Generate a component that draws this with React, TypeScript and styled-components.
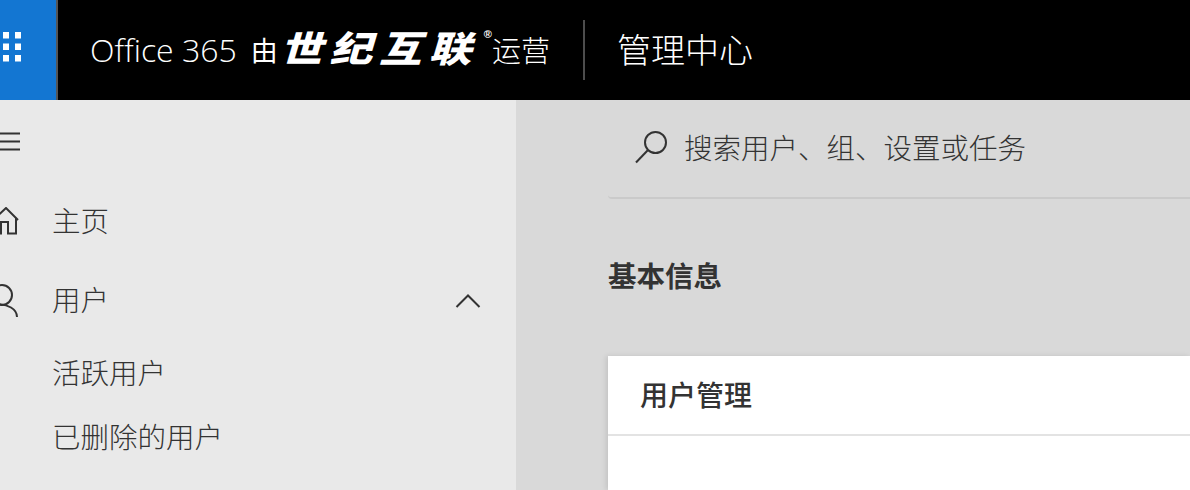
import React from "react";
import styled, { createGlobalStyle } from "styled-components";

const Global = createGlobalStyle`
  html, body { margin: 0; padding: 0; width: 1190px; height: 490px; overflow: hidden; background: #d9d9d9; }
  #root { width: 1190px; height: 490px; overflow: hidden; }
  * { box-sizing: border-box; }
`;

const FONT = `"Open Sans", "Noto Sans CJK SC", sans-serif`;
const CJK = `"Noto Sans CJK SC", sans-serif`;

const Page = styled.div`
  width: 1190px;
  height: 490px;
  display: flex;
  flex-direction: column;
  overflow: hidden;
  font-family: ${CJK};
  color: #333;
`;

const Header = styled.header`
  height: 100px;
  flex: none;
  background: #000;
  display: flex;
  align-items: center;
  color: #fff;
`;

const Waffle = styled.div`
  width: 58px;
  height: 100px;
  flex: none;
  background: #1376d2;
  border-right: 2px solid #555;
  display: flex;
  align-items: center;
`;

const Brand = styled.div`
  margin-left: 32px;
  display: flex;
  align-items: center;
  height: 100px;
  white-space: nowrap;
`;

const Office = styled.span`
  font-family: ${FONT};
  font-weight: 300;
  font-size: 32px;
  margin-top: -2px;
`;

const By = styled.span`
  font-size: 27px;
  font-weight: 400;
  margin-left: 14px;
  margin-top: -1px;
`;

const Partner = styled.span`
  display: inline-block;
  width: 204px;
  font-size: 36px;
  font-weight: 900;
  font-style: italic;
  margin-left: 2px;
  letter-spacing: 6px;
  margin-top: -9px;
  transform: scaleX(1.18);
  transform-origin: left center;
`;

const Reg = styled.span`
  font-family: "Liberation Sans", sans-serif;
  font-size: 11px;
  font-weight: 700;
  align-self: flex-start;
  margin: 29px 0 0 0;
  line-height: 1;
`;

const Operated = styled.span`
  font-size: 29px;
  font-weight: 300;
  margin-left: 0;
  margin-top: -2px;
`;

const Divider = styled.div`
  width: 2px;
  height: 60px;
  background: #4d4d4d;
  margin-left: 33px;
`;

const AdminTitle = styled.span`
  font-size: 34px;
  font-weight: 300;
  margin-left: 32px;
  margin-top: -4px;
  white-space: nowrap;
`;

const Body = styled.div`
  flex: 1;
  display: flex;
  min-height: 0;
`;

const Sidebar = styled.nav`
  width: 516px;
  flex: none;
  background: #e9e9e9;
  display: flex;
  flex-direction: column;
  overflow: hidden;
`;

const MenuIcon = styled.div`
  height: 83px;
  display: flex;
  padding-top: 32px;
`;

const NavRow = styled.div<{ $h: number }>`
  height: ${(p) => p.$h}px;
  display: flex;
  align-items: center;
  padding-right: 35px;
  font-size: 28.5px;
  font-weight: 300;
  color: #333;
`;

const IconSlot = styled.div`
  width: 52px;
  flex: none;
  display: flex;
  align-items: center;
`;

const NavLabel = styled.span`
  flex: 1;
  margin-top: -6px;
`;

const SubRow = styled.div`
  height: 64px;
  display: flex;
  align-items: center;
  padding-left: 52px;
  padding-bottom: 4px;
  font-size: 28.5px;
  font-weight: 300;
`;

const Main = styled.main`
  flex: 1;
  padding-left: 92px;
  display: flex;
  flex-direction: column;
  min-width: 0;
`;

const SearchBar = styled.div`
  height: 99px;
  flex: none;
  border-bottom: 2px solid #cacaca;
  border-radius: 0 0 0 4px;
  display: flex;
  align-items: center;
  padding-left: 27px;
  gap: 15px;
  font-size: 28.5px;
  font-weight: 300;
  color: #333;
  padding-bottom: 4px;
`;

const SectionTitle = styled.h2`
  margin: 0;
  height: 157px;
  padding-top: 51px;
  font-size: 28.5px;
  line-height: 50px;
  font-weight: 700;
  color: #333;
`;

const Card = styled.section`
  flex: 1;
  background: #fff;
  box-shadow: -2px 0 5px rgba(0, 0, 0, 0.1);
`;

const CardHeader = styled.div`
  height: 80px;
  border-bottom: 2px solid #e3e3e3;
  padding-left: 32px;
  padding-bottom: 3px;
  display: flex;
  align-items: center;
  font-size: 28px;
  font-weight: 500;
  color: #333;
`;

const dots: number[] = [-9, 3, 15];

export default function App() {
  return (
    <Page>
      <Global />
      <Header>
        <Waffle>
          <svg width="56" height="100" viewBox="0 0 56 100" aria-hidden>
            {dots.map((x) =>
              [32, 43.5, 55].map((y) => (
                <rect key={`${x}-${y}`} x={x} y={y} width="6" height="6.5" fill="#fff" />
              ))
            )}
          </svg>
        </Waffle>
        <Brand>
          <Office>Office 365</Office>
          <By>由</By>
          <Partner>世纪互联</Partner>
          <Reg>®</Reg>
          <Operated>运营</Operated>
        </Brand>
        <Divider />
        <AdminTitle>管理中心</AdminTitle>
      </Header>
      <Body>
        <Sidebar>
          <MenuIcon>
            <svg width="22" height="20" viewBox="0 0 22 20" aria-hidden>
              <path d="M0 1.5h20M0 9.5h20M0 17.5h20" stroke="#333" strokeWidth="2" fill="none" />
            </svg>
          </MenuIcon>
          <NavRow $h={78}>
            <IconSlot>
              <svg width="20" height="30" viewBox="0 0 20 30" aria-hidden>
                <path d="M-8 14 L6 1 L18 13 M16 11 V26.5 H8 V15 H1 V26.5 H-4" stroke="#333" strokeWidth="2" fill="none" />
              </svg>
            </IconSlot>
            <NavLabel>主页</NavLabel>
          </NavRow>
          <NavRow $h={80}>
            <IconSlot>
              <svg width="20" height="34" viewBox="0 0 20 34" aria-hidden>
                <circle cx="2" cy="11" r="10" stroke="#333" strokeWidth="2" fill="none" />
                <path d="M-4 20 C8 20 17 25 17 33" stroke="#333" strokeWidth="2" fill="none" />
              </svg>
            </IconSlot>
            <NavLabel>用户</NavLabel>
            <svg width="26" height="16" viewBox="0 0 26 16" aria-hidden>
              <path d="M1.5 14 L13 2.5 L24.5 14" stroke="#333" strokeWidth="2" fill="none" />
            </svg>
          </NavRow>
          <SubRow>活跃用户</SubRow>
          <SubRow>已删除的用户</SubRow>
        </Sidebar>
        <Main>
          <SearchBar>
            <svg width="34" height="34" viewBox="0 0 34 34" aria-hidden>
              <circle cx="20.5" cy="12.5" r="10.5" stroke="#333" strokeWidth="2" fill="none" />
              <path d="M13 20 L1 32.5" stroke="#333" strokeWidth="2" fill="none" />
            </svg>
            <span>搜索用户、组、设置或任务</span>
          </SearchBar>
          <SectionTitle>基本信息</SectionTitle>
          <Card>
            <CardHeader>用户管理</CardHeader>
          </Card>
        </Main>
      </Body>
    </Page>
  );
}
